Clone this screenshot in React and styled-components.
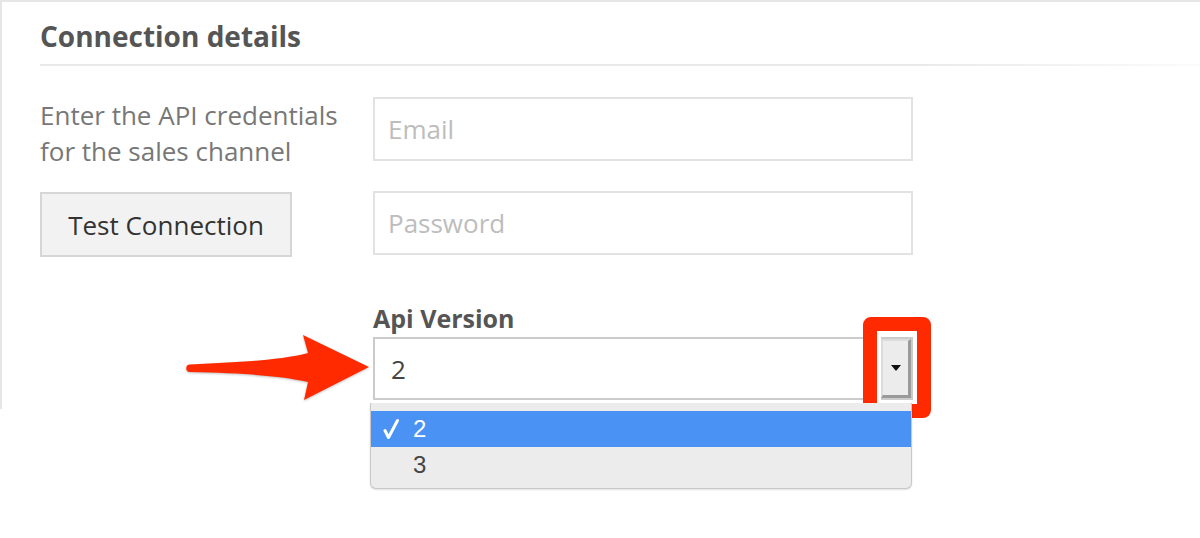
import styled, { createGlobalStyle } from 'styled-components';

const GlobalStyle = createGlobalStyle`
  html, body {
    margin: 0;
    padding: 0;
    background: #fff;
  }
  body {
    font-family: 'Open Sans', 'Liberation Sans', sans-serif;
    width: 1200px;
    height: 538px;
    overflow: hidden;
  }
`;

const versions = ['2', '3'];

function CheckIcon() {
  return (
    <svg width="16" height="22" viewBox="0 0 16 22">
      <path
        d="M 2 12.5 L 5.5 19.5 L 14.5 2.5"
        fill="none"
        stroke="#fff"
        strokeWidth="3"
        strokeLinecap="round"
        strokeLinejoin="round"
      />
    </svg>
  );
}

export default function App() {
  const current = '2';

  return (
    <>
      <GlobalStyle />
      <Panel>
        <Title>Connection details</Title>
        <Divider />
        <Form>
          <LeftCol>
            <Hint>
              Enter the API credentials
              <br />
              for the sales channel
            </Hint>
            <TestButton type="button">Test Connection</TestButton>
          </LeftCol>
          <RightCol>
            <TextInput type="email" placeholder="Email" />
            <TextInput type="password" placeholder="Password" $gap={30} />
            <Field>
              <FieldLabel>Api Version</FieldLabel>
              <SelectWrap>
                <SelectBox>
                  <SelectValue>{current}</SelectValue>
                  <ArrowButton>
                    <ArrowGlyph />
                  </ArrowButton>
                </SelectBox>
                <Highlight />
                <Menu>
                  {versions.map((v) => (
                    <Option key={v} $active={v === current}>
                      <Check>{v === current && <CheckIcon />}</Check>
                      {v}
                    </Option>
                  ))}
                </Menu>
              </SelectWrap>
            </Field>
          </RightCol>
        </Form>
        <Pointer width="192" height="76" viewBox="0 0 192 76">
          <path
            d="M 8 34.5 C 60 32, 100 30, 126 23 L 121 5 L 187 37 L 122 70 L 126 52 C 100 46, 60 43, 8 42 A 3.75 3.75 0 0 1 8 34.5 Z"
            fill="#ff2a00"
          />
        </Pointer>
      </Panel>
    </>
  );
}

const Panel = styled.div`
  position: relative;
  box-sizing: border-box;
  height: 409px;
  border-top: 2px solid #e6e6e6;
  border-left: 2px solid #e6e6e6;
  padding-left: 38px;
`;

const Title = styled.h2`
  margin: 16px 0 0;
  font-size: 28px;
  line-height: 36px;
  font-weight: 700;
  color: #555;
`;

const Divider = styled.div`
  margin-top: 10px;
  height: 2px;
  background: linear-gradient(to right, #e9e9e9 75%, #fbfbfb);
`;

const Form = styled.div`
  display: flex;
  margin-top: 31px;
`;

const LeftCol = styled.div`
  flex: none;
  width: 333px;
  display: flex;
  flex-direction: column;
  align-items: flex-start;
`;

const Hint = styled.p`
  margin: 0;
  font-size: 26px;
  line-height: 36px;
  color: #777;
`;

const TestButton = styled.button`
  margin-top: 23px;
  box-sizing: border-box;
  width: 252px;
  height: 65px;
  background: #f2f2f2;
  border: 2px solid #d6d6d6;
  border-radius: 0;
  font-family: 'Open Sans', 'Liberation Sans', sans-serif;
  font-size: 26px;
  color: #333;
  padding: 0;
`;

const RightCol = styled.div`
  flex: none;
  width: 540px;
  display: flex;
  flex-direction: column;
`;

const TextInput = styled.input`
  box-sizing: border-box;
  display: block;
  width: 540px;
  height: 64px;
  margin: ${({ $gap }) => ($gap ? `${$gap}px` : '0')} 0 0;
  padding: 0 13px;
  border: 2px solid #e2e2e2;
  border-radius: 0;
  font-family: 'Open Sans', 'Liberation Sans', sans-serif;
  font-size: 26px;
  color: #444;
  outline: none;
  &::placeholder {
    color: #bdbdbd;
  }
`;

const Field = styled.div`
  margin-top: 48px;
`;

const FieldLabel = styled.div`
  font-size: 25px;
  line-height: 30px;
  font-weight: 700;
  color: #555;
`;

const SelectWrap = styled.div`
  position: relative;
  margin-top: 4px;
`;

const SelectBox = styled.div`
  box-sizing: border-box;
  display: flex;
  align-items: stretch;
  justify-content: space-between;
  width: 540px;
  height: 63px;
  border: 2px solid #cbcbcb;
  background: #fff;
`;

const SelectValue = styled.span`
  display: flex;
  align-items: center;
  padding-left: 16px;
  font-size: 26px;
  color: #444;
`;

const ArrowButton = styled.span`
  box-sizing: border-box;
  width: 30px;
  display: flex;
  align-items: center;
  justify-content: center;
  background: #ececec;
  border-top: 2px solid #dcdcdc;
  border-left: 2px solid #dcdcdc;
  border-right: 3px solid #9a9a9a;
  border-bottom: 3px solid #9a9a9a;
`;

const ArrowGlyph = styled.span`
  width: 0;
  height: 0;
  border-left: 5px solid transparent;
  border-right: 5px solid transparent;
  border-top: 6px solid #111;
`;

const Highlight = styled.div`
  position: absolute;
  left: 490px;
  top: -20px;
  box-sizing: border-box;
  width: 68px;
  height: 101px;
  border: 14px solid #ff2a00;
  border-radius: 8px;
  box-shadow: inset 0 0 0 4px #fff;
  pointer-events: none;
`;

const Menu = styled.div`
  position: absolute;
  left: -3px;
  top: calc(100% + 3px);
  box-sizing: border-box;
  width: 542px;
  height: 86px;
  padding-top: 8px;
  background: #ececec;
  border: 1px solid #c8c8c8;
  border-top: none;
  border-radius: 0 0 6px 6px;
  box-shadow: 0 1px 2px rgba(0, 0, 0, 0.12);
`;

const Option = styled.div`
  display: flex;
  align-items: center;
  height: 36px;
  padding-left: 12px;
  font-family: 'Liberation Sans', Arial, sans-serif;
  font-size: 24px;
  background: ${({ $active }) => ($active ? '#4a93f5' : 'transparent')};
  color: ${({ $active }) => ($active ? '#fff' : '#444')};
`;

const Check = styled.span`
  display: flex;
  align-items: center;
  width: 30px;
`;

const Pointer = styled.svg`
  position: absolute;
  left: 180px;
  top: 328px;
  filter: drop-shadow(0 1px 1px rgba(0, 0, 0, 0.25));
`;
